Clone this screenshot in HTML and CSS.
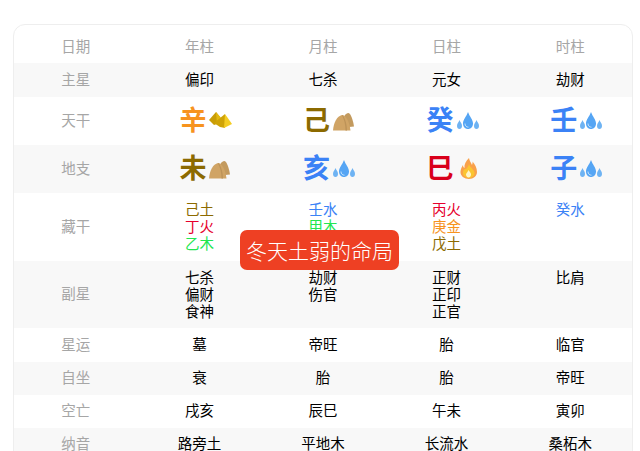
FILE: index.html
```html
<!DOCTYPE html>
<html lang="zh">
<head>
<meta charset="utf-8">
<title>命盘</title>
<link rel="stylesheet" href="styles.css">
</head>
<body>
<svg class="defs" width="0" height="0" aria-hidden="true">
  <defs>
    <symbol id="metal" viewBox="0 0 23 16">
      <path d="M0 8 7 0 11 5 8 12 5 13Z" fill="#c99d06"/>
      <path d="M7 0 13 7 8 12Z" fill="#e3b90f"/>
      <path d="M5 11 16 2 16 16 11 15Z" fill="#cfa307"/>
      <path d="M16 2 23 12 15 16Z" fill="#f4cc22"/>
    </symbol>
    <symbol id="earth" viewBox="0 0 21 18">
      <path d="M11 4C12 1 14 0 15.500 0 18 1 20 7 21 13.500L16 14Z" fill="#c39a5e"/>
      <path d="M0 17.500C.5 10 4 3 9 2 13 2 16.500 9 17.500 17.500Z" fill="#d0a465"/>
      <path d="M9 2.500C11 6 12.500 11 12.500 17.500H14C14 11 12 5 9.500 2Z" fill="#bd9358"/>
    </symbol>
    <symbol id="water" viewBox="0 0 22 17">
      <path d="M2.500 8C1.500 10.500 0 11.500 0 14 0 15.800 1.100 17 2.500 17S5 15.800 5 14C5 11.500 3.500 10.500 2.500 8Z" fill="#6eb3f3"/>
      <path d="M19.500 8C18.500 10.500 17 11.500 17 14 17 15.800 18.100 17 19.500 17S22 15.800 22 14C22 11.500 20.500 10.500 19.500 8Z" fill="#6eb3f3"/>
      <path d="M11 0C9.500 4.500 6 7.500 6 11.500 6 14.800 8.200 17 11 17S16 14.800 16 11.500C16 7.500 12.500 4.500 11 0Z" fill="#55a5f4"/>
      <path d="M8 11.500C8 13.800 9.400 15.200 11.500 15.200" fill="none" stroke="#bfe0fb" stroke-width="1"/>
    </symbol>
    <symbol id="fire" viewBox="0 0 17 21">
      <path d="M9 0C9.500 3 11 4.500 12 7 12.500 5.500 12.800 4.500 12.500 3.500 15 6 17 10 17 14 17 18 13.500 21 9 21S0 18 .5 13.500C.8 10.500 2 8.500 3 7 3 8.500 3.500 9.500 4.500 10 4 6 6 3 9 0Z" fill="#f9a14a"/>
      <path d="M9 6C9.500 9 13 10.500 14.500 14 15 17.500 12.500 20 9 20S2.500 17.500 3 14C3.500 11.500 5 10.500 6 11.500 6.500 10 8.500 8.500 9 6Z" fill="#fbc531"/>
      <path d="M8.500 12C9.500 14 11.500 15 11 17 10.500 18.800 9.500 19.500 8.500 19.500S6 18.500 6 16.500C6 15 8 14 8.500 12Z" fill="#fff5c9"/>
    </symbol>
  </defs>
</svg>
<main class="card">
  <table class="chart">
    <thead>
      <tr class="row-head"><th class="label">日期</th><th class="label">年柱</th><th class="label">月柱</th><th class="label">日柱</th><th class="label">时柱</th></tr>
    </thead>
    <tbody>
      <tr class="alt row-t"><th class="label">主星</th><td>偏印</td><td>七杀</td><td>元女</td><td>劫财</td></tr>
      <tr class="row-big"><th class="label">天干</th>
        <td><span class="pillar"><span class="big c-metal">辛</span><svg class="ico ico-metal"><use href="#metal"/></svg></span></td>
        <td><span class="pillar"><span class="big c-earth">己</span><svg class="ico ico-earth"><use href="#earth"/></svg></span></td>
        <td><span class="pillar"><span class="big c-water">癸</span><svg class="ico ico-water"><use href="#water"/></svg></span></td>
        <td><span class="pillar"><span class="big c-water">壬</span><svg class="ico ico-water"><use href="#water"/></svg></span></td>
      </tr>
      <tr class="alt row-big"><th class="label">地支</th>
        <td><span class="pillar"><span class="big c-earth">未</span><svg class="ico ico-earth"><use href="#earth"/></svg></span></td>
        <td><span class="pillar"><span class="big c-water">亥</span><svg class="ico ico-water"><use href="#water"/></svg></span></td>
        <td><span class="pillar"><span class="big c-fire">巳</span><svg class="ico ico-fire"><use href="#fire"/></svg></span></td>
        <td><span class="pillar"><span class="big c-water">子</span><svg class="ico ico-water"><use href="#water"/></svg></span></td>
      </tr>
      <tr class="row-m top"><th class="label">藏干</th>
        <td><div class="c-earth">己土</div><div class="c-fire2">丁火</div><div class="c-wood">乙木</div></td>
        <td><div class="c-water">壬水</div><div class="c-wood">甲木</div></td>
        <td><div class="c-fire2">丙火</div><div class="c-metal">庚金</div><div class="c-earth">戊土</div></td>
        <td><div class="c-water">癸水</div></td>
      </tr>
      <tr class="alt row-n top"><th class="label">副星</th>
        <td><div>七杀</div><div>偏财</div><div>食神</div></td>
        <td><div>劫财</div><div>伤官</div></td>
        <td><div>正财</div><div>正印</div><div>正官</div></td>
        <td><div>比肩</div></td>
      </tr>
      <tr class="row-t"><th class="label">星运</th><td>墓</td><td>帝旺</td><td>胎</td><td>临官</td></tr>
      <tr class="alt row-s"><th class="label">自坐</th><td>衰</td><td>胎</td><td>胎</td><td>帝旺</td></tr>
      <tr class="row-s"><th class="label">空亡</th><td>戌亥</td><td>辰巳</td><td>午未</td><td>寅卯</td></tr>
      <tr class="alt row-s"><th class="label">纳音</th><td>路旁土</td><td>平地木</td><td>长流水</td><td>桑柘木</td></tr>
    </tbody>
  </table>
</main>
<div class="toast">冬天土弱的命局</div>
</body>
</html>
```
FILE: styles.css
```css
html, body {
  margin: 0;
  height: 451px;
  overflow: hidden;
  background: #fff;
}
body {
  position: relative;
  padding: 24px 7px 0 13px;
  box-sizing: border-box;
  font-family: "Noto Sans CJK SC", "Liberation Sans", sans-serif;
  font-size: 14.500px;
  line-height: 17px;
  color: #000;
}
.defs { position: absolute; }
.card {
  height: 500px;
  border: 1px solid #eeeeee;
  border-radius: 12px;
  overflow: hidden;
  background: #fff;
}
.chart {
  width: 100%;
  table-layout: fixed;
  border-collapse: collapse;
}
th, td {
  padding: 0 0 4px;
  text-align: center;
  font-weight: 400;
}
.label { color: #a6a6a6; }
.row-head { height: 38px; }
.row-head th { padding: 3px 0 0; }
.row-s { height: 33px; }
.row-t { height: 34px; }
.row-big { height: 48px; }
.row-m { height: 68px; }
.row-n { height: 67px; }
.top td { vertical-align: top; padding: 7px 0 0; }
.alt { background: #f8f8f8; }
.pillar {
  display: inline-flex;
  align-items: center;
  gap: 3px;
  width: 40px;
  vertical-align: middle;
  text-align: left;
}
.big {
  flex: none;
  width: 27px;
  font-size: 27px;
  line-height: 34px;
  font-weight: 700;
}
.ico { display: block; flex: none; }
.ico-metal { width: 23px; height: 16px; margin-top: 2px; }
.ico-earth { width: 21px; height: 18px; margin-top: 6px; }
.ico-water { width: 22px; height: 17px; margin-top: 3px; }
.ico-fire { width: 17px; height: 21px; margin: 2px 0 0 3px; }
.c-metal { color: #f7931e; }
.c-earth { color: #8c6a00; }
.c-water { color: #3b82f6; }
.c-fire { color: #d9001b; }
.c-fire2 { color: #e6002d; }
.c-wood { color: #22e650; }
.toast {
  position: absolute;
  left: 240px;
  top: 230px;
  width: 159px;
  height: 40px;
  border-radius: 7px;
  background: #ee4023;
  color: #fff;
  font-size: 21px;
  line-height: 40px;
  text-align: center;
  font-weight: 300;
}
```
